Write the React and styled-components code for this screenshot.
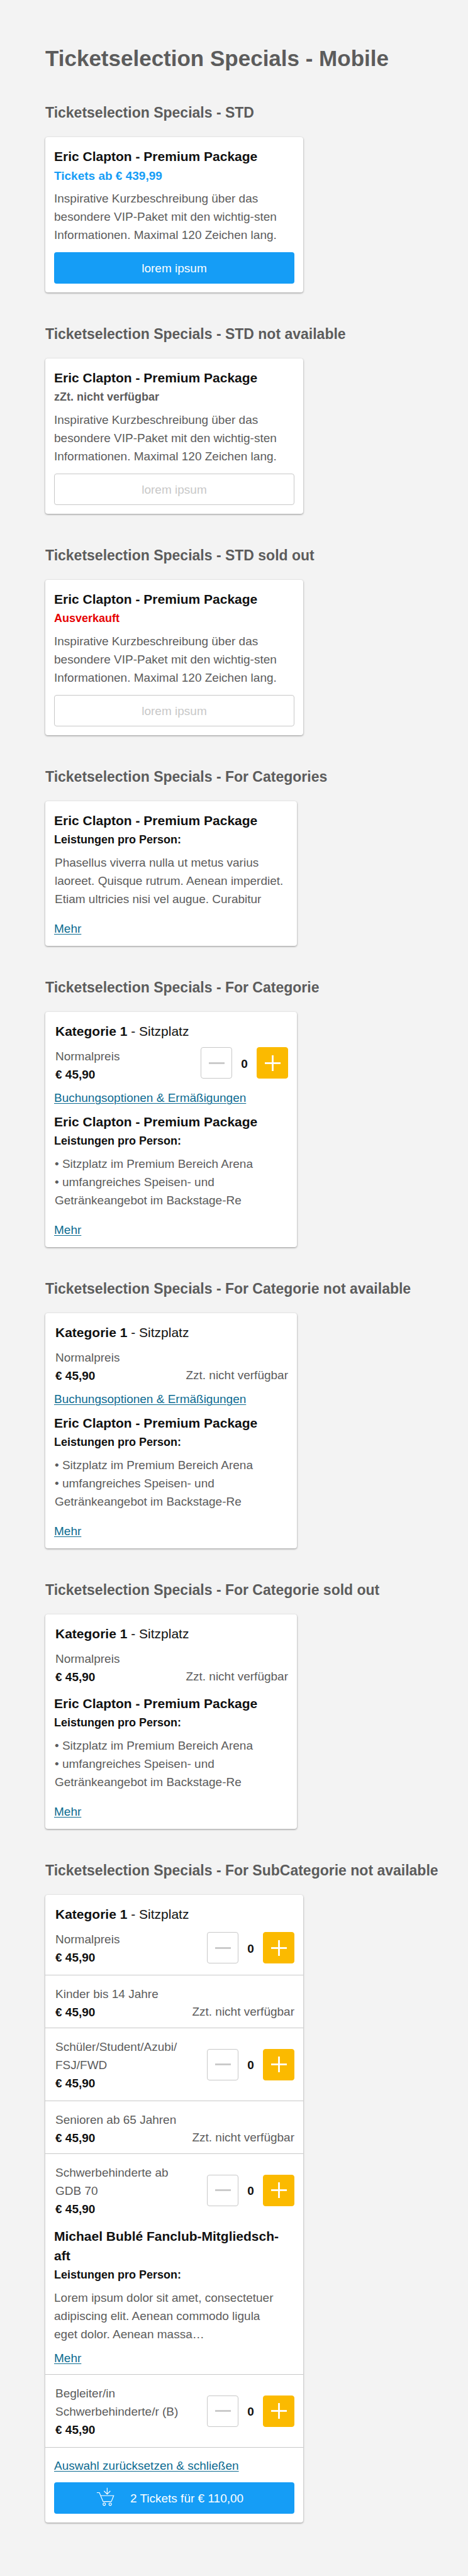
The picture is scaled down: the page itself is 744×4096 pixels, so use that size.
import React, { useId, useState } from "react";
import styled, { createGlobalStyle, css } from "styled-components";

const color = {
  page: "#f3f3f3",
  ink: "#111111",
  grey: "#5c5c5c",
  line: "#c8c8c8",
  blue: "#159df6",
  link: "#0c6b91",
  yellow: "#fbba00",
  red: "#e60000",
};

const GlobalStyle = createGlobalStyle`
  *, *::before, *::after { box-sizing: border-box; }
  body {
    margin: 0;
    background: ${color.page};
    color: ${color.grey};
    font-family: "Liberation Sans", Arial, Helvetica, sans-serif;
    font-size: 19px;
    line-height: 29px;
  }
  h1, h2, h3, p, ul { margin: 0; padding: 0; font-weight: inherit; }
  button { font: inherit; }
`;

const Page = styled.main`
  display: flex;
  flex-direction: column;
  gap: 53px;
  padding: 73px 24px 83px 72px;
`;

const PageTitle = styled.h1`
  && { font-weight: 700; }
  font-size: 35px;
  line-height: 40px;
`;

const SectionBox = styled.section`
  display: flex;
  flex-direction: column;
  gap: 25px;
`;

const SectionTitle = styled.h2`
  && { font-weight: 700; }
  font-size: 23px;
  line-height: 27px;
`;

const Card = styled.article`
  width: 100%;
  max-width: ${(p) => (p.$narrow ? "400px" : "410px")};
  padding: 15px 14px 14px;
  background: #fff;
  border-radius: 4px;
  box-shadow: 0 1px 3px rgba(0, 0, 0, 0.4);
`;

const CardTitle = styled.h3`
  && {
    margin-top: ${(p) => p.$gap || 0}px;
    padding: 0 0 1px ${(p) => (p.$light ? 2 : 0)}px;
    font-weight: ${(p) => (p.$light ? 400 : 700)};
  }
  color: ${color.ink};
  font-size: 21px;
  line-height: 31px;
`;

const Status = styled.p`
  color: ${(p) => p.$color || color.ink};
  font-size: ${(p) => (p.$price ? 19 : 18)}px;
  font-weight: 700;
`;

const copy = css`
  && { margin-top: 7px; }
`;

const Copy = styled.p`
  ${copy}
  && { padding: ${(p) => (p.$inset ? "0 0 0 1px" : "0 16px 0 0")}; }
`;

const Benefits = styled.ul`
  ${copy}
  && { padding-left: 1px; }
  list-style: none;
`;

const TextLink = styled.a`
  display: table;
  margin-top: ${(p) => p.$gap || 0}px;
  color: ${color.link};
  line-height: 27px;
  text-decoration: underline;
  text-decoration-thickness: 1px;
  text-underline-offset: 2px;
`;

const ActionButton = styled.button`
  display: flex;
  align-items: center;
  justify-content: center;
  gap: 25px;
  width: 100%;
  height: 50px;
  margin-top: 13px;
  padding: 0 ${(p) => (p.$withIcon ? 14 : 0)}px 0 0;
  border: 0;
  border-radius: 4px;
  background: ${color.blue};
  color: #fff;
  cursor: pointer;

  &:disabled {
    border: 1px solid ${color.line};
    background: #fff;
    color: ${color.line};
    cursor: default;
  }

  svg { margin-bottom: 4px; }
`;

const Row = styled.div`
  display: flex;
  align-items: ${(p) => p.$align};
  justify-content: space-between;
  gap: 20px;
  margin-top: ${(p) => (p.$first ? 9 : 0)}px;
  padding-left: 2px;
`;

const RowText = styled.div`
  min-width: 0;
`;

const RowPrice = styled.p`
  color: ${color.ink};
  font-weight: 700;
`;

const Unavailable = styled.p`
  && { margin-bottom: 1px; }
  white-space: nowrap;
`;

const StepperBox = styled.div`
  display: flex;
  flex: none;
  align-items: center;
  margin-bottom: 2px;
`;

const StepButton = styled.button`
  display: grid;
  place-items: center;
  width: 50px;
  height: 50px;
  padding: 0;
  border: 1px solid ${(p) => (p.$plus ? color.yellow : color.line)};
  border-radius: 4px;
  background: ${(p) => (p.$plus ? color.yellow : "#fff")};
  color: ${(p) => (p.$plus ? "#fff" : color.line)};
  cursor: pointer;
`;

const Count = styled.output`
  width: 39px;
  padding-top: 2px;
  color: ${color.ink};
  font-weight: 700;
  text-align: center;
`;

const Divider = styled.hr`
  height: 1px;
  margin: ${(p) => p.$gap}px -14px 15px;
  border: 0;
  background: ${color.line};
`;

function Sign({ plus }) {
  return (
    <svg width="25" height="25" viewBox="0 0 25 25" fill="none" stroke="currentColor" strokeWidth="2.8" aria-hidden="true">
      <path d="M0 12.500H25" />
      {plus && <path d="M12.500 0V25" />}
    </svg>
  );
}

function CartIcon() {
  return (
    <svg width="29" height="30" viewBox="156 140 146 152" fill="none" stroke="currentColor" strokeWidth="6" aria-hidden="true">
      <path d="M160 183H181L211 255H277L296 207H191" />
      <path d="M243.500 144V196M218 169L243.500 195L269 169" />
      <circle cx="220" cy="276" r="10" />
      <circle cx="268" cy="276" r="10" />
    </svg>
  );
}

function Stepper({ label }) {
  const [count, setCount] = useState(0);
  return (
    <StepperBox role="group" aria-label={label}>
      <StepButton type="button" aria-label="Weniger" onClick={() => setCount(Math.max(0, count - 1))}>
        <Sign />
      </StepButton>
      <Count>{count}</Count>
      <StepButton $plus type="button" aria-label="Mehr" onClick={() => setCount(count + 1)}>
        <Sign plus />
      </StepButton>
    </StepperBox>
  );
}

function PriceRow({ label, suffix, available, first, align = "center" }) {
  return (
    <Row $first={first} $align={available ? align : "flex-end"}>
      <RowText>
        <p>
          {label}
          {suffix && <wbr />}
          {suffix}
        </p>
        <RowPrice>€ 45,90</RowPrice>
      </RowText>
      {available ? <Stepper label={label} /> : <Unavailable>Zzt. nicht verfügbar</Unavailable>}
    </Row>
  );
}

function Section({ title, children }) {
  const id = useId();
  return (
    <SectionBox aria-labelledby={id}>
      <SectionTitle id={id}>{title}</SectionTitle>
      {children}
    </SectionBox>
  );
}

function StandardCard({ status, statusColor, price, disabled }) {
  return (
    <Card>
      <CardTitle>Eric Clapton - Premium Package</CardTitle>
      <Status $color={statusColor} $price={price}>{status}</Status>
      <Copy>
        Inspirative Kurzbeschreibung über das besondere VIP-Paket mit den wichtig-sten Informationen. Maximal 120
        Zeichen lang.
      </Copy>
      <ActionButton type="button" disabled={disabled}>lorem ipsum</ActionButton>
    </Card>
  );
}

function CategoryTitle() {
  return (
    <CardTitle $light>
      <b>Kategorie 1</b> - Sitzplatz
    </CardTitle>
  );
}

function CategoryCard({ available, options }) {
  return (
    <Card $narrow>
      <CategoryTitle />
      <PriceRow first label="Normalpreis" available={available} align="flex-start" />
      {options && <TextLink href="#optionen" $gap={9}>Buchungsoptionen &amp; Ermäßigungen</TextLink>}
      <CardTitle $gap={options ? 9 : 12}>Eric Clapton - Premium Package</CardTitle>
      <Status>Leistungen pro Person:</Status>
      <Benefits>
        <li>• Sitzplatz im Premium Bereich Arena</li>
        <li>• umfangreiches Speisen- und Getränkeangebot im Backstage-Re</li>
      </Benefits>
      <TextLink href="#mehr" $gap={19}>Mehr</TextLink>
    </Card>
  );
}

export default function App() {
  return (
    <>
      <GlobalStyle />
      <Page>
        <PageTitle>Ticketselection Specials - Mobile</PageTitle>

        <Section title="Ticketselection Specials - STD">
          <StandardCard status="Tickets ab € 439,99" statusColor={color.blue} price />
        </Section>

        <Section title="Ticketselection Specials - STD not available">
          <StandardCard status="zZt. nicht verfügbar" statusColor={color.grey} disabled />
        </Section>

        <Section title="Ticketselection Specials - STD sold out">
          <StandardCard status="Ausverkauft" statusColor={color.red} disabled />
        </Section>

        <Section title="Ticketselection Specials - For Categories">
          <Card $narrow>
            <CardTitle>Eric Clapton - Premium Package</CardTitle>
            <Status>Leistungen pro Person:</Status>
            <Copy $inset>
              Phasellus viverra nulla ut metus varius laoreet. Quisque rutrum. Aenean imperdiet. Etiam ultricies nisi
              vel augue. Curabitur
            </Copy>
            <TextLink href="#mehr" $gap={19}>Mehr</TextLink>
          </Card>
        </Section>

        <Section title="Ticketselection Specials - For Categorie">
          <CategoryCard available options />
        </Section>

        <Section title="Ticketselection Specials - For Categorie not available">
          <CategoryCard options />
        </Section>

        <Section title="Ticketselection Specials - For Categorie sold out">
          <CategoryCard />
        </Section>

        <Section title="Ticketselection Specials - For SubCategorie not available">
          <Card>
            <CategoryTitle />
            <PriceRow first label="Normalpreis" available />
            <Divider $gap={13} />
            <PriceRow label="Kinder bis 14 Jahre" />
            <Divider $gap={10} />
            <PriceRow label="Schüler/Student/Azubi/" suffix="FSJ/FWD" available />
            <Divider $gap={13} />
            <PriceRow label="Senioren ab 65 Jahren" />
            <Divider $gap={10} />
            <PriceRow label="Schwerbehinderte ab GDB 70" available />
            <CardTitle $gap={13}>Michael Bublé Fanclub-Mitgliedsch-aft</CardTitle>
            <Status>Leistungen pro Person:</Status>
            <Copy>
              Lorem ipsum dolor sit amet, consectetuer adipiscing elit. Aenean commodo ligula eget dolor. Aenean massa…
            </Copy>
            <TextLink href="#mehr" $gap={10}>Mehr</TextLink>
            <Divider $gap={12} />
            <PriceRow label="Begleiter/in Schwerbehinderte/r (B)" available />
            <Divider $gap={13} />
            <TextLink href="#reset">Auswahl zurücksetzen &amp; schließen</TextLink>
            <ActionButton $withIcon type="button">
              <CartIcon />
              2 Tickets für € 110,00
            </ActionButton>
          </Card>
        </Section>
      </Page>
    </>
  );
}
